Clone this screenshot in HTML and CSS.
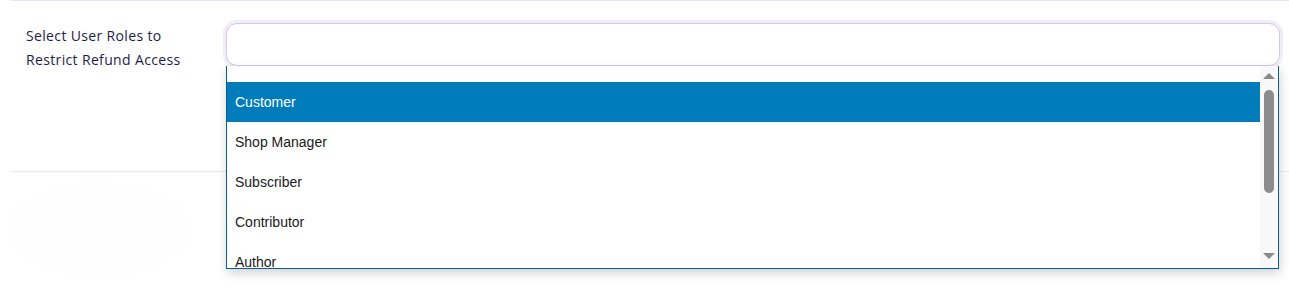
FILE: index.html
```html
<!DOCTYPE html>
<html>
<head>
<meta charset="utf-8">
<link rel="stylesheet" href="styles.css">
</head>
<body>
<div class="page">
  <div class="topline"></div>
  <div class="row">
    <div class="label">Select User Roles to<br>Restrict Refund Access</div>
    <div class="field">
      <div class="input"></div>
      <div class="dropdown">
        <div class="list">
          <div class="opt active">Customer</div>
          <div class="opt">Shop Manager</div>
          <div class="opt">Subscriber</div>
          <div class="opt">Contributor</div>
          <div class="opt">Author</div>
        </div>
        <div class="scrollbar">
          <div class="arrow up"></div>
          <div class="thumb"></div>
          <div class="spacer"></div>
          <div class="arrow down"></div>
        </div>
      </div>
    </div>
  </div>
  <div class="sep"></div>
  <div class="ghost"></div>
</div>
</body>
</html>
```

FILE: styles.css
```css
html, body {
  margin: 0;
  padding: 0;
  background: #ffffff;
}
.page {
  width: 1289px;
  height: 303px;
  overflow: hidden;
  position: relative;
}
.topline {
  margin-left: 11px;
  height: 1px;
  background: #e9e6f4;
}
.row {
  display: flex;
  padding-top: 22px;
  height: 148px;
}
.label {
  width: 200px;
  padding-left: 26px;
  padding-top: 1px;
  font-family: "Open Sans", "Lato", sans-serif;
  font-size: 14px;
  font-weight: 500;
  line-height: 24px;
  color: #231d4a;
  letter-spacing: 0.35px;
}
.field {
  position: relative;
  width: 1054px;
}
.input {
  height: 41px;
  border: 1px solid #d5c8ef;
  border-radius: 11px;
  box-shadow: 0 0 0 3px #f0edf5;
  background: #fff;
}
.dropdown {
  position: absolute;
  left: 0;
  top: 43px;
  width: 1051px;
  height: 202px;
  background: #fff;
  border-left: 1px solid #0b5c8f;
  border-right: 1px solid #0b5c8f;
  border-bottom: 1px solid #0b5c8f;
  box-shadow: 1px 4px 10px rgba(0,0,0,0.18);
  display: flex;
  overflow: hidden;
  z-index: 2;
}
.list {
  flex: 1;
  padding-top: 16px;
}
.opt {
  height: 40px;
  line-height: 40px;
  padding-left: 8px;
  font-family: "Liberation Sans", Arial, sans-serif;
  font-size: 14px;
  color: #1a1a1a;
}
.opt.active {
  background: #007cba;
  color: #ffffff;
}
.scrollbar {
  width: 18px;
  background: #f8f8f8;
  display: flex;
  flex-direction: column;
  align-items: center;
}
.arrow {
  width: 0;
  height: 0;
  border-left: 6px solid transparent;
  border-right: 6px solid transparent;
}
.arrow.up {
  margin-top: 7px;
  border-bottom: 6px solid #8a8a8a;
}
.arrow.down {
  margin-bottom: 9px;
  border-top: 6px solid #8a8a8a;
}
.thumb {
  margin-top: 11px;
  width: 10px;
  height: 103px;
  border-radius: 5px;
  background: #8c8c8c;
}
.spacer {
  flex: 1;
}
.sep {
  margin-left: 11px;
  height: 1px;
  background: #ebe8f3;
}
.ghost {
  margin: 10px 0 0 9px;
  width: 180px;
  height: 95px;
  border-radius: 50%;
  background: #fefefe;
}
```
